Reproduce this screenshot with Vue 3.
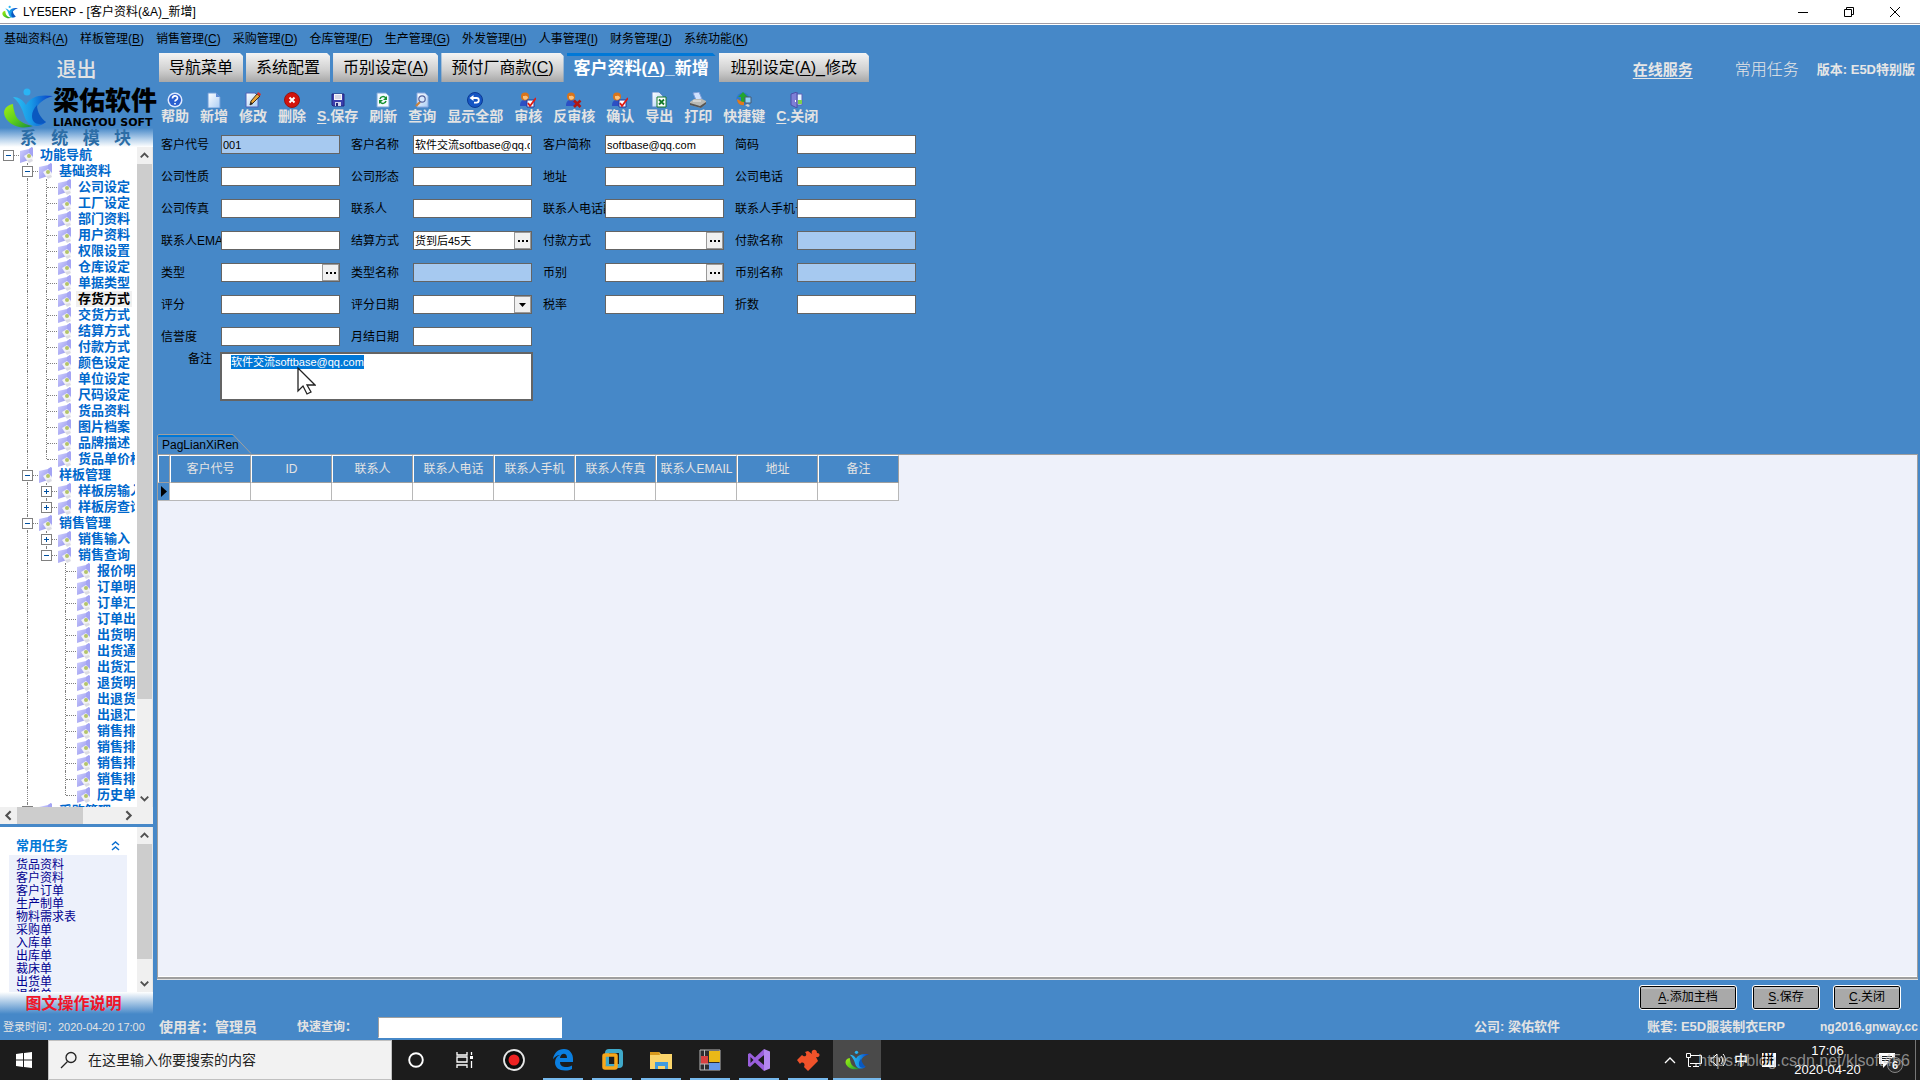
<script setup>
import { ref, onMounted } from 'vue';

const menus = [
  ['基础资料', 'A'], ['样板管理', 'B'], ['销售管理', 'C'], ['采购管理', 'D'], ['仓库管理', 'F'],
  ['生产管理', 'G'], ['外发管理', 'H'], ['人事管理', 'I'], ['财务管理', 'J'], ['系统功能', 'K']
];

const tabs = [
  { name: '导航菜单' },
  { name: '系统配置' },
  { name: '币别设定', key: 'A' },
  { name: '预付厂商款', key: 'C' },
  { name: '客户资料', key: 'A', tail: '_新增', active: true },
  { name: '班别设定', key: 'A', tail: '_修改' }
];

const tools = [
  { icon: 'help', name: '帮助' },
  { icon: 'new', name: '新增' },
  { icon: 'edit', name: '修改' },
  { icon: 'delete', name: '删除' },
  { icon: 'save', key: 'S', name: '保存' },
  { icon: 'refresh', name: '刷新' },
  { icon: 'search', name: '查询' },
  { icon: 'showall', name: '显示全部' },
  { icon: 'audit', name: '审核' },
  { icon: 'unaudit', name: '反审核' },
  { icon: 'audit', name: '确认' },
  { icon: 'export', name: '导出' },
  { icon: 'print', name: '打印' },
  { icon: 'shortcut', name: '快捷键' },
  { icon: 'close', key: 'C', name: '关闭' }
];

// level, text, box, last
const base = ['公司设定', '工厂设定', '部门资料', '用户资料', '权限设置', '仓库设定', '单据类型', '存货方式', '交货方式',
  '结算方式', '付款方式', '颜色设定', '单位设定', '尺码设定', '货品资料', '图片档案', '品牌描述', '货品单价档'];
const query = ['报价明', '订单明', '订单汇', '订单出', '出货明', '出货通', '出货汇', '退货明', '出退货', '出退汇',
  '销售排', '销售排', '销售排', '销售排', '历史单'];
const leaves = (list, level) => list.map((text, i) => ({ level, text, last: i === list.length - 1 }));

const tree = [
  { level: 0, text: '功能导航', box: '-' },
  { level: 1, text: '基础资料', box: '-' },
  ...leaves(base, 2),
  { level: 1, text: '样板管理', box: '-' },
  { level: 2, text: '样板房输入', box: '+' },
  { level: 2, text: '样板房查询', box: '+', last: true },
  { level: 1, text: '销售管理', box: '-' },
  { level: 2, text: '销售输入', box: '+' },
  { level: 2, text: '销售查询', box: '-', last: true },
  ...leaves(query, 3),
  { level: 1, text: '采购管理', box: '+' }
];

const tasks = ['货品资料', '客户资料', '客户订单', '生产制单', '物料需求表', '采购单', '入库单', '出库单', '裁床单', '出货单', '退货单'];

const fields = [
  { label: '客户代号', value: '001', lock: true }, { label: '客户名称', value: '软件交流softbase@qq.com' },
  { label: '客户简称', value: 'softbase@qq.com' }, { label: '简码' },
  { label: '公司性质' }, { label: '公司形态' }, { label: '地址' }, { label: '公司电话' },
  { label: '公司传真' }, { label: '联系人' }, { label: '联系人电话副' }, { label: '联系人手机号' },
  { label: '联系人EMAIL' }, { label: '结算方式', value: '货到后45天', pick: true }, { label: '付款方式', pick: true }, { label: '付款名称', lock: true },
  { label: '类型', pick: true }, { label: '类型名称', lock: true }, { label: '币别', pick: true }, { label: '币别名称', lock: true },
  { label: '评分' }, { label: '评分日期', drop: true }, { label: '税率' }, { label: '折数' },
  { label: '信誉度' }, { label: '月结日期' }
];

const columns = ['客户代号', 'ID', '联系人', '联系人电话', '联系人手机', '联系人传真', '联系人EMAIL', '地址', '备注'];
const apps = ['cortana', 'taskview', 'record', 'edge', 'vmware', 'folder', 'blocks', 'vs', 'puzzle', 'logo'];

const remark = ref('软件交流softbase@qq.com');
const remarkRef = ref(null);
onMounted(() => {
  remarkRef.value.focus();
  remarkRef.value.select();
});
</script>

<template>
  <svg class="defs" aria-hidden="true">
    <defs>
      <linearGradient id="gGreen" x1="0" y1="0" x2="1" y2="1">
        <stop offset="0" stop-color="#a4ee14" /><stop offset=".5" stop-color="#5fd01c" /><stop offset="1" stop-color="#168a3c" />
      </linearGradient>
      <linearGradient id="gBlue" x1="0" y1="0" x2="1" y2="0">
        <stop offset="0" stop-color="#2fc0f4" /><stop offset=".45" stop-color="#1899e6" /><stop offset="1" stop-color="#0838c4" />
      </linearGradient>
      <linearGradient id="gPage" x1="0" y1="0" x2="1" y2="1">
        <stop offset="0" stop-color="#fff" /><stop offset="1" stop-color="#a9cdf5" />
      </linearGradient>
      <linearGradient id="gBook" x1="0" y1="0" x2="1" y2="1">
        <stop offset="0" stop-color="#d4d4ff" /><stop offset="1" stop-color="#8a8aea" />
      </linearGradient>
    </defs>
    <symbol id="i-logo" viewBox="0 0 50 40">
      <path d="M10 16C0 18-2 27 6 34c8 7 18 6 24 4-10-2-16-6-18-12-1-4-2-7-2-10z" fill="url(#gGreen)" />
      <path d="M10 9c6 0 10 3 13 8 4-8 13-11 27-9-10 3-16 8-17 14-1 7 4 11 10 12-7 6-16 5-20-2-3-6-3-14-13-23z" fill="url(#gBlue)" />
      <path d="M34 17c0 7 4 13 9 17-7 4-14 2-14-6 0-4 2-8 5-11z" fill="#0a58c0" />
      <circle cx="24" cy="4" r="3.500" fill="#2ab4f4" />
    </symbol>
    <symbol id="i-book" viewBox="0 0 16 16">
      <path d="M1 4l9-2 3-2v11l-3 2-9 3z" fill="url(#gBook)" />
      <path d="M10 2l3-2 1 1v9l-4 3z" fill="#a4a4f4" />
      <path d="M5 9l5-3 4 4-1 4-4 1-2-3z" fill="#f2f2f6" /><circle cx="10" cy="9" r="2" fill="#b4c46a" />
      <path d="M8 13l5-1 1 2-4 2z" fill="#dcdce4" />
    </symbol>
    <symbol id="i-help" viewBox="0 0 16 16">
      <circle cx="8" cy="8" r="7.500" fill="#dfeaff" /><circle cx="8" cy="8" r="6" fill="#2a5fd0" />
      <path d="M5.500 6.500C5.500 3 10.500 3 10.500 6c0 2-2.500 2-2.500 3.500M8 11v1.500" fill="none" stroke="#fff" stroke-width="1.700" />
    </symbol>
    <symbol id="i-new" viewBox="0 0 16 16">
      <path d="M2 1h8l4 4v11H2z" fill="url(#gPage)" stroke="#6c9bd6" /><path d="M10 1l4 4h-4z" fill="#5d8cd8" />
    </symbol>
    <symbol id="i-edit" viewBox="0 0 16 16">
      <path d="M1 1h9l3 3v11H1z" fill="url(#gPage)" stroke="#4f62b8" />
      <path d="M5 13l1-4 6-7 3 2-7 7z" fill="#e9a437" stroke="#443018" /><path d="M12 2l1-2 3 2-1 2z" fill="#d8322b" /><path d="M5 13l1-3 2 2z" fill="#222" />
    </symbol>
    <symbol id="i-delete" viewBox="0 0 16 16">
      <circle cx="8" cy="8" r="7.500" fill="#d3130c" stroke="#971410" /><path d="M5.500 5.500l5 5m0-5l-5 5" stroke="#fff" stroke-width="2" />
    </symbol>
    <symbol id="i-save" viewBox="0 0 16 16">
      <path d="M2 2h12v12H3l-1-1z" fill="#3b3fae" stroke="#23267c" /><path d="M4 2h8v6H4z" fill="#f5f5fb" /><path d="M5 4h6M5 6h6" stroke="#b6b8d0" />
      <path d="M5 10h6v4H5z" fill="#cfd2ea" /><path d="M6 11h2v3H6z" fill="#23267c" />
    </symbol>
    <symbol id="i-refresh" viewBox="0 0 16 16">
      <path d="M2 1h9l3 3v11H2z" fill="#f4faff" stroke="#7fa6d8" />
      <path d="M5 7c1-3 4-3 6-1M11 9c-1 3-4 3-6 1" fill="none" stroke="#149030" stroke-width="1.500" /><path d="M12 4v4H8zM4 12V8h4z" fill="#149030" />
    </symbol>
    <symbol id="i-search" viewBox="0 0 16 16">
      <path d="M3 1h8l3 3v11H3z" fill="url(#gPage)" stroke="#8aa8e0" />
      <path d="M2 14l4-4" stroke="#c9813a" stroke-width="2.200" /><circle cx="8" cy="7" r="3.200" fill="#d8e9ff" stroke="#54629c" stroke-width="1.200" />
    </symbol>
    <symbol id="i-showall" viewBox="0 0 16 16">
      <circle cx="8" cy="8" r="7.500" fill="#1455c4" stroke="#0b3a94" />
      <path d="M5 6h4.500a2.300 2.300 0 010 4.600H7" fill="none" stroke="#fff" stroke-width="1.800" /><path d="M2.500 6L6.500 3v6z" fill="#fff" />
    </symbol>
    <symbol id="i-person" viewBox="0 0 16 16">
      <path d="M0 14c0-5 2-6 5-6s6 1 6 6z" fill="#2c4fc4" /><circle cx="5" cy="4.500" r="4" fill="#d8741a" /><path d="M3 4c2 0 3-1 5 1 0 3-4 4-5 1z" fill="#fbc27c" />
    </symbol>
    <symbol id="i-audit" viewBox="0 0 16 16">
      <use href="#i-person" width="16" height="16" /><path d="M7 8h7v7H7z" fill="#fff" stroke="#223a9c" /><path d="M8 11l2 3 6-8" fill="none" stroke="#e01b12" stroke-width="1.800" />
    </symbol>
    <symbol id="i-unaudit" viewBox="0 0 16 16">
      <use href="#i-person" width="16" height="16" /><path d="M8 8.500l6.500 6.500m0-6.500L8 15" stroke="#b01712" stroke-width="2.600" />
    </symbol>
    <symbol id="i-export" viewBox="0 0 16 16">
      <path d="M1 0h7l4 4v11H1z" fill="url(#gPage)" stroke="#5d86c8" /><path d="M6 5h9v10H6z" fill="#fff" stroke="#157a2c" /><path d="M8 7.500l5 5m0-5l-5 5" stroke="#157a2c" stroke-width="1.800" />
    </symbol>
    <symbol id="i-print" viewBox="0 0 16 16">
      <path d="M3 1l6-1 3 7-6 1z" fill="#cfe2ff" stroke="#7d9ed8" /><path d="M0 10l4-3h8l4 2v3l-5 4-11-3z" fill="#b9b9b4" /><path d="M0 11l10 3 6-4v2l-5 4-11-3z" fill="#555" /><path d="M3 9h8" stroke="#eee" />
    </symbol>
    <symbol id="i-shortcut" viewBox="0 0 16 16">
      <circle cx="7" cy="7" r="6.500" fill="#2d77cc" /><path d="M7 0l5 5H9v5H5V5H2z" fill="#22a52e" /><path d="M1 7c2 0 3 3 7 3v3C4 14 1 11 1 7z" fill="#e07b1e" />
      <path d="M9 5h6v6H9z" fill="#8fd0f7" stroke="#4a5a70" /><path d="M9 13l3-1 2 2-2 1z" fill="#d0d0d0" />
    </symbol>
    <symbol id="i-close" viewBox="0 0 16 16">
      <path d="M8 2h5v11H8z" fill="#e8f3ff" stroke="#5d62b8" /><path d="M9 8h4v4H9z" fill="#7ed04c" /><path d="M2 2l6-2v16l-6-3z" fill="#7f7fd6" stroke="#4d50a8" /><path d="M6 8h1v2H6z" fill="#fff" />
    </symbol>
    <symbol id="i-cortana" viewBox="0 0 24 24"><circle cx="12" cy="12" r="6.800" fill="none" stroke="#fff" stroke-width="1.900" /></symbol>
    <symbol id="i-taskview" viewBox="0 0 24 24">
      <path d="M4 4v3h10V4M4 20v-3h10v3M4 9h10v5H4zM18.500 4v3M18.500 13v7" fill="none" stroke="#fff" stroke-width="1.300" /><path d="M17 8h3v3h-3z" fill="#fff" />
    </symbol>
    <symbol id="i-record" viewBox="0 0 24 24">
      <circle cx="12" cy="12" r="10" fill="#0c0c0c" stroke="#e6e6e6" stroke-width="1.800" /><circle cx="12" cy="12" r="5.500" fill="#ee2222" />
    </symbol>
    <symbol id="i-edge" viewBox="0 0 24 24">
      <path d="M2 11C3 5 7 1 13 1c6 0 9 5 9 10v3H9c0 4 3 5 6 5 2 0 4-.5 6-1.600V21c-2 1-4 1.600-7 1.600-6 0-10-3-10-8C4 11 6 8 9 7c-3 0-5 2-7 4zm7-1h7c0-6-6.500-5-7 0z" fill="#0b7fe0" />
    </symbol>
    <symbol id="i-vmware" viewBox="0 0 24 24">
      <rect x="7" y="3" width="14" height="15" rx="2" fill="none" stroke="#3fa9c9" stroke-width="4" /><rect x="4" y="7" width="12" height="13" rx="1" fill="none" stroke="#f7a81b" stroke-width="3.500" />
    </symbol>
    <symbol id="i-folder" viewBox="0 0 24 24">
      <path d="M1 4h9l2 2h11v15H1z" fill="#fbd56b" /><path d="M1 4h9l1 3H1z" fill="#d99a1d" /><path d="M6 14h13v7h-3v-3H9v3H6z" fill="#3f9be0" />
    </symbol>
    <symbol id="i-blocks" viewBox="0 0 24 24">
      <path d="M2 2h20v20H2z" fill="#2c2c30" stroke="#b8b8b8" /><path d="M11 3h11v11H11z" fill="#eab818" /><path d="M3 8h7v8H3z" fill="#d94040" /><path d="M11 15h11v7H11z" fill="#6699ec" /><path d="M6.500 2v6M6.500 16v6M2 16h9" stroke="#b8b8b8" />
    </symbol>
    <symbol id="i-vs" viewBox="0 0 24 24">
      <path d="M17 1v22l-9-8.500L3 19l-2-1V6l2-1 5 4.500zM3.500 9v6l3-3zM11 12l6 5V7z" fill="#9a5fdc" fill-rule="evenodd" /><path d="M17 1l6 2.500v17L17 23z" fill="#b487f0" />
    </symbol>
    <symbol id="i-puzzle" viewBox="0 0 24 24">
      <path d="M1 12l5-5c3 3 6 0 3-3l3-1 4 3c-2-5 5-6 5-1 4 0 3 5-1 4l2 4-10 10-4-4c2-4-2-6-4-3z" fill="#f0522a" />
    </symbol>
    <symbol id="i-up" viewBox="0 0 16 16"><path d="M4 10l4-4 4 4" fill="none" stroke="#505050" stroke-width="2" /></symbol>
    <symbol id="i-down" viewBox="0 0 16 16"><path d="M4 6l4 4 4-4" fill="none" stroke="#505050" stroke-width="2" /></symbol>
    <symbol id="i-left" viewBox="0 0 16 16"><path d="M10 4L6 8l4 4" fill="none" stroke="#505050" stroke-width="2" /></symbol>
    <symbol id="i-right" viewBox="0 0 16 16"><path d="M6 4l4 4-4 4" fill="none" stroke="#505050" stroke-width="2" /></symbol>
  </svg>

  <div class="screen">
    <header class="titlebar">
      <svg class="app-icon"><use href="#i-logo" /></svg>
      <span>LYE5ERP - [客户资料(&amp;A)_新增]</span>
      <div class="win-btns">
        <button aria-label="最小化"><svg viewBox="0 0 12 12"><path d="M1 6.500h10" stroke="#000" /></svg></button>
        <button aria-label="还原"><svg viewBox="0 0 12 12"><path d="M1.500 3.500h7v7h-7zM3.500 3V1.500h7v7H9" fill="none" stroke="#000" /></svg></button>
        <button aria-label="关闭"><svg viewBox="0 0 12 12"><path d="M1 1l10 10M11 1L1 11" stroke="#000" /></svg></button>
      </div>
    </header>

    <nav class="menubar">
      <a v-for="m in menus" :key="m[1]" href="#">{{ m[0] }}(<u>{{ m[1] }}</u>)</a>
    </nav>

    <div class="body">
      <aside class="sidebar">
        <button class="exit">退出</button>
        <div class="brand">
          <svg><use href="#i-logo" /></svg>
          <div class="brand-text"><b>梁佑软件</b><span>LIANGYOU SOFT</span></div>
        </div>
        <div class="modules"><span v-for="c in '系统模块'" :key="c">{{ c }}</span></div>

        <div class="tree-wrap">
          <ul class="tree">
            <li v-for="(n, i) in tree" :key="i">
              <span v-for="k in n.level" :key="k" class="cell" :class="{ line: k === 2 }"></span>
              <span class="cell knot" :class="{ line: n.level > 0, last: n.last }">
                <i v-if="n.box" class="box">
                  <svg viewBox="0 0 9 9"><path :d="n.box === '+' ? 'M2 4.500h5M4.500 2v5' : 'M2 4.500h5'" stroke="#0050a0" /></svg>
                </i>
              </span>
              <svg class="book"><use href="#i-book" /></svg>
              <span class="node" :class="{ current: n.text === '存货方式' }">{{ n.text }}</span>
            </li>
          </ul>
          <div class="vbar">
            <svg><use href="#i-up" /></svg><i class="thumb tree-thumb"></i><i class="rest tree-rest"></i><svg><use href="#i-down" /></svg>
          </div>
        </div>
        <div class="hbar">
          <svg><use href="#i-left" /></svg><i class="thumb"></i><i class="rest"></i><svg><use href="#i-right" /></svg><i class="corner"></i>
        </div>

        <div class="tasks">
          <div class="tasks-main">
            <div class="tasks-head">
              <b>常用任务</b>
              <svg viewBox="0 0 9 11"><path d="M1 5l3.500-3L8 5M1 10l3.500-3L8 10" fill="none" stroke="#0b6fd0" stroke-width="1.500" /></svg>
            </div>
            <div class="tasks-list"><a v-for="t in tasks" :key="t" href="#">{{ t }}</a></div>
          </div>
          <div class="vbar">
            <svg><use href="#i-up" /></svg><i class="thumb task-thumb"></i><i class="rest task-rest"></i><svg><use href="#i-down" /></svg>
          </div>
        </div>
        <a class="manual" href="#">图文操作说明</a>
      </aside>

      <main class="main">
        <div class="topline">
          <div class="tabs">
            <button v-for="t in tabs" :key="t.name" class="tab" :class="{ active: t.active }">
              {{ t.name }}<template v-if="t.key">(<u>{{ t.key }}</u>){{ t.tail }}</template>
            </button>
          </div>
          <div class="links">
            <a class="service" href="#">在线服务</a>
            <a class="common" href="#">常用任务</a>
            <b>版本: E5D特别版</b>
          </div>
        </div>

        <div class="toolbar">
          <button v-for="t in tools" :key="t.name">
            <svg><use :href="'#i-' + t.icon" /></svg>
            <span><template v-if="t.key"><u>{{ t.key }}</u>.</template>{{ t.name }}</span>
          </button>
        </div>

        <form class="form" @submit.prevent>
          <div class="grid">
            <div v-for="(f, i) in fields" :key="f.label" class="field">
              <label :for="'f' + i">{{ f.label }}</label>
              <div class="ctl" :class="{ lock: f.lock }">
                <select v-if="f.drop" :id="'f' + i"><option></option></select>
                <input v-else :id="'f' + i" type="text" :value="f.value" :readonly="f.lock">
                <button v-if="f.pick" type="button" class="mini" aria-label="选择"><i></i><i></i><i></i></button>
                <span v-if="f.drop" class="mini"><svg viewBox="0 0 7 4"><path d="M0 0h7L3.500 4z" /></svg></span>
              </div>
            </div>
          </div>
          <div class="remark">
            <label for="remark">备注</label>
            <textarea id="remark" ref="remarkRef" v-model="remark" spellcheck="false"></textarea>
            <svg class="cursor" viewBox="0 0 19 28"><path d="M1 1v23l5-5 4 8 4-2-4-7h8z" fill="#fff" stroke="#222" stroke-width="1.300" /></svg>
          </div>
        </form>

        <div class="page-tab">
          <svg viewBox="0 0 95 20"><path d="M1 3h76l-2-2H1z" fill="#0078d7" /><path d="M.5 20V2l1-1.500H76L94 19.500" fill="none" stroke="#9f9f9f" /></svg>
          <span>PagLianXiRen</span>
        </div>
        <section class="sheet">
          <table>
            <thead><tr><th class="mark"></th><th v-for="c in columns" :key="c">{{ c }}</th></tr></thead>
            <tbody>
              <tr>
                <td class="mark"><svg viewBox="0 0 6 11"><path d="M0 0l6 5.500L0 11z" /></svg></td>
                <td v-for="c in columns" :key="c"></td>
              </tr>
            </tbody>
          </table>
        </section>

        <div class="actions">
          <button class="wide"><u>A</u>.添加主档</button>
          <button><u>S</u>.保存</button>
          <button><u>C</u>.关闭</button>
        </div>
      </main>
    </div>

    <footer class="status">
      <span class="login">登录时间：2020-04-20 17:00</span>
      <b class="user">使用者：管理员</b>
      <label for="quick">快速查询：</label>
      <input id="quick" type="text">
      <b class="company">公司: 梁佑软件</b>
      <b class="account">账套: E5D服装制衣ERP</b>
      <b class="host">ng2016.gnway.cc</b>
    </footer>

    <div class="taskbar">
      <button class="start" aria-label="开始"><svg viewBox="0 0 16 16"><path d="M0 2l7-1v6.500H0zM8 1l8-1v7.500H8zM0 8.500h7V15l-7-1zM8 8.500h8V16l-8-1z" fill="#fff" /></svg></button>
      <div class="find">
        <svg viewBox="0 0 18 18"><circle cx="11" cy="6.500" r="5" fill="none" stroke="#222" stroke-width="1.300" /><path d="M7.500 10.500L1 17" stroke="#222" stroke-width="1.300" /></svg>
        <input type="text" aria-label="搜索" placeholder="在这里输入你要搜索的内容">
      </div>
      <button v-for="(a, i) in apps" :key="a" class="app" :class="{ run: i > 2, on: a === 'logo' }" :aria-label="a">
        <svg><use :href="'#i-' + a" /></svg>
      </button>
      <div class="tray">
        <svg class="t12" viewBox="0 0 12 12"><path d="M1 9l5-5 5 5" fill="none" stroke="#fff" stroke-width="1.300" /></svg>
        <svg class="t16" viewBox="0 0 16 16"><path d="M4 3.500h11.500v8H4M.5 1.500h4v4h-4zM2.500 6v8.500H5M7 14.500h6M10 12v2" fill="none" stroke="#fff" /></svg>
        <svg class="t16" viewBox="0 0 16 16"><path d="M1 6h2l4-4v12l-4-4H1zM9 6c1 1 1 3 0 4M11 4c2 2 2 6 0 8M13 2c3 3 3 9 0 12" fill="none" stroke="#fff" /></svg>
        <span class="zh">中</span>
        <span class="pin">拼</span>
        <time><span>17:06</span><span>2020-04-20</span></time>
        <div class="note">
          <svg viewBox="0 0 16 16"><path d="M0 1h16v11H8l-4 4v-4H0z" fill="#fff" /><path d="M3 4.500h10M3 6.500h10M3 8.500h7" stroke="#1c1c1c" /></svg>
          <em>6</em>
        </div>
        <i class="peek"></i>
        <span class="watermark">https://blog.csdn.net/klsoft456</span>
      </div>
    </div>
  </div>
</template>

<style>
body { margin: 0; overflow: hidden; }
</style>

<style scoped>
.defs { position: absolute; width: 0; height: 0; }
.screen { height: 100vh; display: flex; flex-direction: column; background: #4688c8; color: #000; font: 12px/16px "Liberation Sans", "Noto Sans CJK SC", sans-serif; overflow: hidden; }
.screen * { box-sizing: border-box; }
button { border: 0; padding: 0; background: none; color: inherit; font: inherit; white-space: nowrap; }
input, select, textarea { font: inherit; color: inherit; border: 0; padding: 0; outline: none; min-width: 0; border-radius: 0; }
a { color: inherit; text-decoration: none; white-space: nowrap; }
u { text-underline-offset: 2px; }
svg { display: block; flex: none; }
i { font-style: normal; }

.titlebar { height: 25px; flex: none; display: flex; align-items: center; background: #fff; border-bottom: 1px solid #fff; box-shadow: inset 0 -1px #a09ca4; padding-left: 2px; }
.app-icon { width: 16px; height: 14px; margin-right: 5px; }
.win-btns { margin-left: auto; display: flex; padding-right: 2px; }
.win-btns button { width: 46px; height: 20px; display: flex; justify-content: center; align-items: center; }
.win-btns svg { width: 12px; height: 12px; }

.menubar { height: 28px; flex: none; display: flex; align-items: center; gap: 12px; padding-left: 4px; }

.body { flex: 1; min-height: 0; display: flex; }
.sidebar { width: 153px; flex: none; display: flex; flex-direction: column; }
.exit { height: 33px; flex: none; color: #e3e3e3; font-size: 20px; font-weight: 500; line-height: 32px; }
.brand { height: 42px; flex: none; display: flex; padding-left: 3px; }
.brand svg { width: 50px; height: 40px; margin-top: 2px; }
.brand-text { display: flex; flex-direction: column; white-space: nowrap; }
.brand-text b { font-size: 26px; line-height: 31px; font-weight: 900; }
.brand-text span { font: bold 11px/11px "DejaVu Sans", sans-serif; }
.modules { height: 19px; flex: none; display: flex; justify-content: space-between; padding: 0 22px 0 20px; background: linear-gradient(#4688c8, #b9d3ec 60%, #fff); color: #2c6da6; font: bold 17px/18px "Noto Sans CJK SC", serif; }

.tree-wrap { flex: 1; min-height: 0; display: flex; background: #fff; border-right: 1px solid #e6e6e6; }
.tree { flex: 1; min-width: 0; margin: 0 2px 0 0; padding: 0; list-style: none; overflow: hidden; }
.tree li { height: 16px; display: flex; align-items: center; }
.cell { width: 19px; height: 16px; flex: none; position: relative; }
.cell.line::before { content: ""; position: absolute; left: 8px; top: 0; height: 100%; border-left: 1px dotted #808080; }
.cell.last::before { height: 8px; }
.knot::after { content: ""; position: absolute; left: 9px; top: 8px; width: 10px; border-top: 1px dotted #808080; }
.box { position: absolute; left: 4px; top: 4px; width: 9px; height: 9px; background: #fff; outline: 1px solid #808080; z-index: 1; }
.box svg { width: 9px; height: 9px; }
.book { width: 16px; height: 16px; }
.node { margin-left: 3px; padding: 0 2px; font-weight: 700; font-size: 13px; line-height: 16px; white-space: nowrap; color: #0068cc; }
.node.current { background: #f0f0f0; color: #000; }

.vbar { width: 15px; flex: none; display: flex; flex-direction: column; background: #f0f0f0; }
.vbar svg { width: 15px; height: 17px; }
.hbar svg { width: 17px; height: 17px; }
.thumb { background: #cdcdcd; }
.tree-thumb { flex: 535; }
.tree-rest { flex: 91; }
.task-thumb { flex: 115; }
.task-rest { flex: 16; }
.hbar { height: 17px; flex: none; display: flex; background: #f0f0f0; margin-bottom: 3px; }
.hbar .thumb { flex: 66; }
.hbar .rest { flex: 37; }
.hbar .corner { width: 16px; }

.tasks { height: 165px; flex: none; display: flex; background: #fff; border-right: 1px solid #e6e6e6; overflow: hidden; }
.tasks-main { flex: 1; padding: 8px 10px 0 9px; }
.tasks-head { height: 20px; display: flex; justify-content: space-between; align-items: center; padding: 0 7px; color: #0078d7; font-size: 13px; line-height: 19px; }
.tasks-head svg { width: 9px; height: 11px; }
.tasks-list { display: flex; flex-direction: column; height: 137px; overflow: hidden; background: #edf1fb; padding: 4px 7px; }
.tasks-list a { flex: none; color: #000090; line-height: 13px; }
.manual { height: 22px; flex: none; text-align: center; padding-right: 6px; background: linear-gradient(#fff, #4688c8); color: #f01428; font: bold 16px/21px "Noto Sans CJK SC", serif; }

.main { flex: 1; min-width: 0; display: flex; flex-direction: column; padding-left: 4px; }
.topline { height: 29px; flex: none; display: flex; justify-content: space-between; padding-left: 2px; }
.tabs { display: flex; gap: 3px; }
.tab { height: 29px; padding: 0 10px; font-size: 16px; background: linear-gradient(#f4f4f4, #cfcfcf 60%, #a8a8a8); clip-path: polygon(0 0, calc(100% - 3px) 0, 100% 3px, 100% 100%, 0 100%); }
.tab.active { background: #4688c8; border-top: 3px solid #0078d7; color: #fff; font-weight: 700; font-size: 17px; padding: 0 7px; }
.tab:last-child { padding: 0 12px; }
.links { display: flex; align-items: center; padding: 4px 5px 0 0; color: #e6e6e6; }
.service { font-size: 15px; font-weight: 700; text-decoration: underline; text-underline-offset: 3px; margin-right: 42px; }
.common { font-size: 16px; font-weight: 300; margin-right: 18px; }
.links b { font-size: 13px; white-space: nowrap; }

.toolbar { height: 53px; flex: none; display: flex; align-items: flex-start; gap: 11px; padding: 10px 0 0 4px; color: #e3e3e3; }
.toolbar button { display: flex; flex-direction: column; align-items: center; font-size: 14px; font-weight: 700; line-height: 16px; }
.toolbar svg { width: 16px; height: 16px; }

.form { flex: none; height: 299px; padding-left: 4px; }
.grid { display: grid; grid-template-columns: 179px repeat(3, 181px); gap: 13px 11px; }
.field { display: flex; align-items: center; height: 19px; }
.field label { flex: 1; min-width: 0; overflow: hidden; white-space: nowrap; }
.ctl { width: 119px; height: 19px; flex: none; display: flex; border: 1px solid #646464; background: #fff; position: relative; font-size: 11px; }
.ctl input, .ctl select { flex: 1; width: 0; background: transparent; padding: 0 1px; appearance: none; }
.ctl.lock { background: #a6c9f0; }
.mini { width: 17px; flex: none; display: flex; align-items: center; justify-content: center; gap: 2px; background: #f0f0f0; border: 1px solid #999; }
.mini i { width: 2px; height: 2px; background: #000; }
.mini svg { width: 7px; height: 4px; }
.remark { display: flex; margin-top: 6px; position: relative; }
.remark label { width: 59px; padding-right: 8px; text-align: right; line-height: 14px; }
.remark textarea { width: 313px; height: 49px; border: 2px solid #646464; background: #fff; padding: 1px 9px; font-size: 11px; line-height: 14px; resize: none; overflow: hidden; caret-color: transparent; }
.remark textarea::selection { background: #0078d7; color: #fff; }
.cursor { position: absolute; left: 136px; top: 15px; width: 19px; height: 28px; }

.page-tab { height: 20px; flex: none; position: relative; padding-left: 5px; line-height: 22px; z-index: 1; }
.page-tab svg { position: absolute; left: 0; top: 0; width: 95px; height: 20px; }
.page-tab span { position: relative; }
.sheet { flex: 1; min-height: 0; background: #eef1fa; border: 1px solid #9f9f9f; border-bottom: 2px solid #9f9f9f; box-shadow: inset 0 -1px #fff, 0 1px #e0e0e0; margin: 0 2px 1px 0; }
table { border-collapse: separate; border-spacing: 0; table-layout: fixed; width: 741px; }
th { width: 81px; height: 28px; padding: 0; background: #4688c8; color: #e3e3e3; font-weight: 400; border: 1px solid #9f9f9f; border-left-color: #fff; border-top-color: #fff; white-space: nowrap; overflow: hidden; }
td { height: 18px; padding: 0; background: #fff; border: solid #b8b8b8; border-width: 0 1px 1px 0; }
.mark { width: 12px; background: #4688c8; }
.mark svg { width: 6px; height: 11px; margin-left: 3px; }

.actions { height: 34px; flex: none; display: flex; justify-content: flex-end; align-items: center; gap: 13px; padding-right: 19px; }
.actions button { width: 68px; height: 25px; border: 1px solid #fff; border-radius: 3px; box-shadow: inset 0 0 0 1px #000, inset 0 3px #c4c4c4; background: #a9a9a9; }
.actions button.wide { width: 98px; margin-right: 2px; }

.status { height: 26px; flex: none; display: flex; align-items: center; color: #e3e3e3; white-space: nowrap; }
.login { width: 157px; padding-left: 3px; font-size: 11px; }
.user { width: 140px; padding-left: 2px; font-size: 14px; }
.status label { width: 81px; font-weight: 700; }
.status input { width: 184px; height: 21px; background: #fff; border: 1px solid #9f9f9f; border-right-color: #fff; border-bottom-color: #fff; margin-top: 1px; color: #000; }
.status .company { margin-left: auto; font-size: 13px; width: 173px; }
.status .account { font-size: 13px; width: 173px; }
.status .host { width: 100px; }

.taskbar { height: 40px; flex: none; display: flex; background: #1c1c1c; color: #fff; }
.start { width: 48px; display: flex; align-items: center; justify-content: center; }
.start svg { width: 16px; height: 16px; }
.find { width: 344px; flex: none; display: flex; align-items: center; gap: 10px; padding-left: 11px; background: #f2f2f2; border: 1px solid #c0c0c0; }
.find svg { width: 18px; height: 18px; }
.find input { flex: 1; font-size: 14px; background: transparent; }
.find input::placeholder { color: #222; opacity: 1; }
.app { width: 48px; margin-right: 1px; display: flex; align-items: center; justify-content: center; position: relative; }
.app svg { width: 24px; height: 24px; }
.app.run::after { content: ""; position: absolute; left: 4px; right: 4px; bottom: 0; height: 2px; background: #76b9ed; }
.app.on { background: #4a4a4a; }
.app.on::after { left: 0; right: 0; }
.app.on svg { height: 20px; }
.tray { margin-left: auto; display: flex; align-items: center; position: relative; padding-right: 4px; }
.t12 { width: 12px; height: 12px; margin-right: 10px; }
.t16 { width: 16px; height: 16px; margin-right: 8px; }
.zh { font-size: 14px; font-weight: 500; margin-right: 14px; }
.pin { width: 14px; height: 14px; line-height: 14px; background: #fff; color: #000; font-weight: 700; margin-right: 18px; }
time { display: flex; flex-direction: column; align-items: center; font-size: 13px; line-height: 19px; width: 67px; margin-right: 18px; }
.note { width: 36px; position: relative; }
.note svg { width: 16px; height: 16px; }
.note em { position: absolute; left: 8px; top: 5px; width: 16px; height: 16px; border-radius: 8px; border: 1px solid #888; background: #2a2a2a; font: bold 11px/14px "Liberation Sans", sans-serif; text-align: center; }
.peek { width: 1px; height: 40px; background: #777; }
.watermark { position: absolute; right: 10px; top: 10px; font: 16px/22px "Liberation Sans", sans-serif; color: rgba(200, 200, 200, 0.65); white-space: nowrap; }
</style>
